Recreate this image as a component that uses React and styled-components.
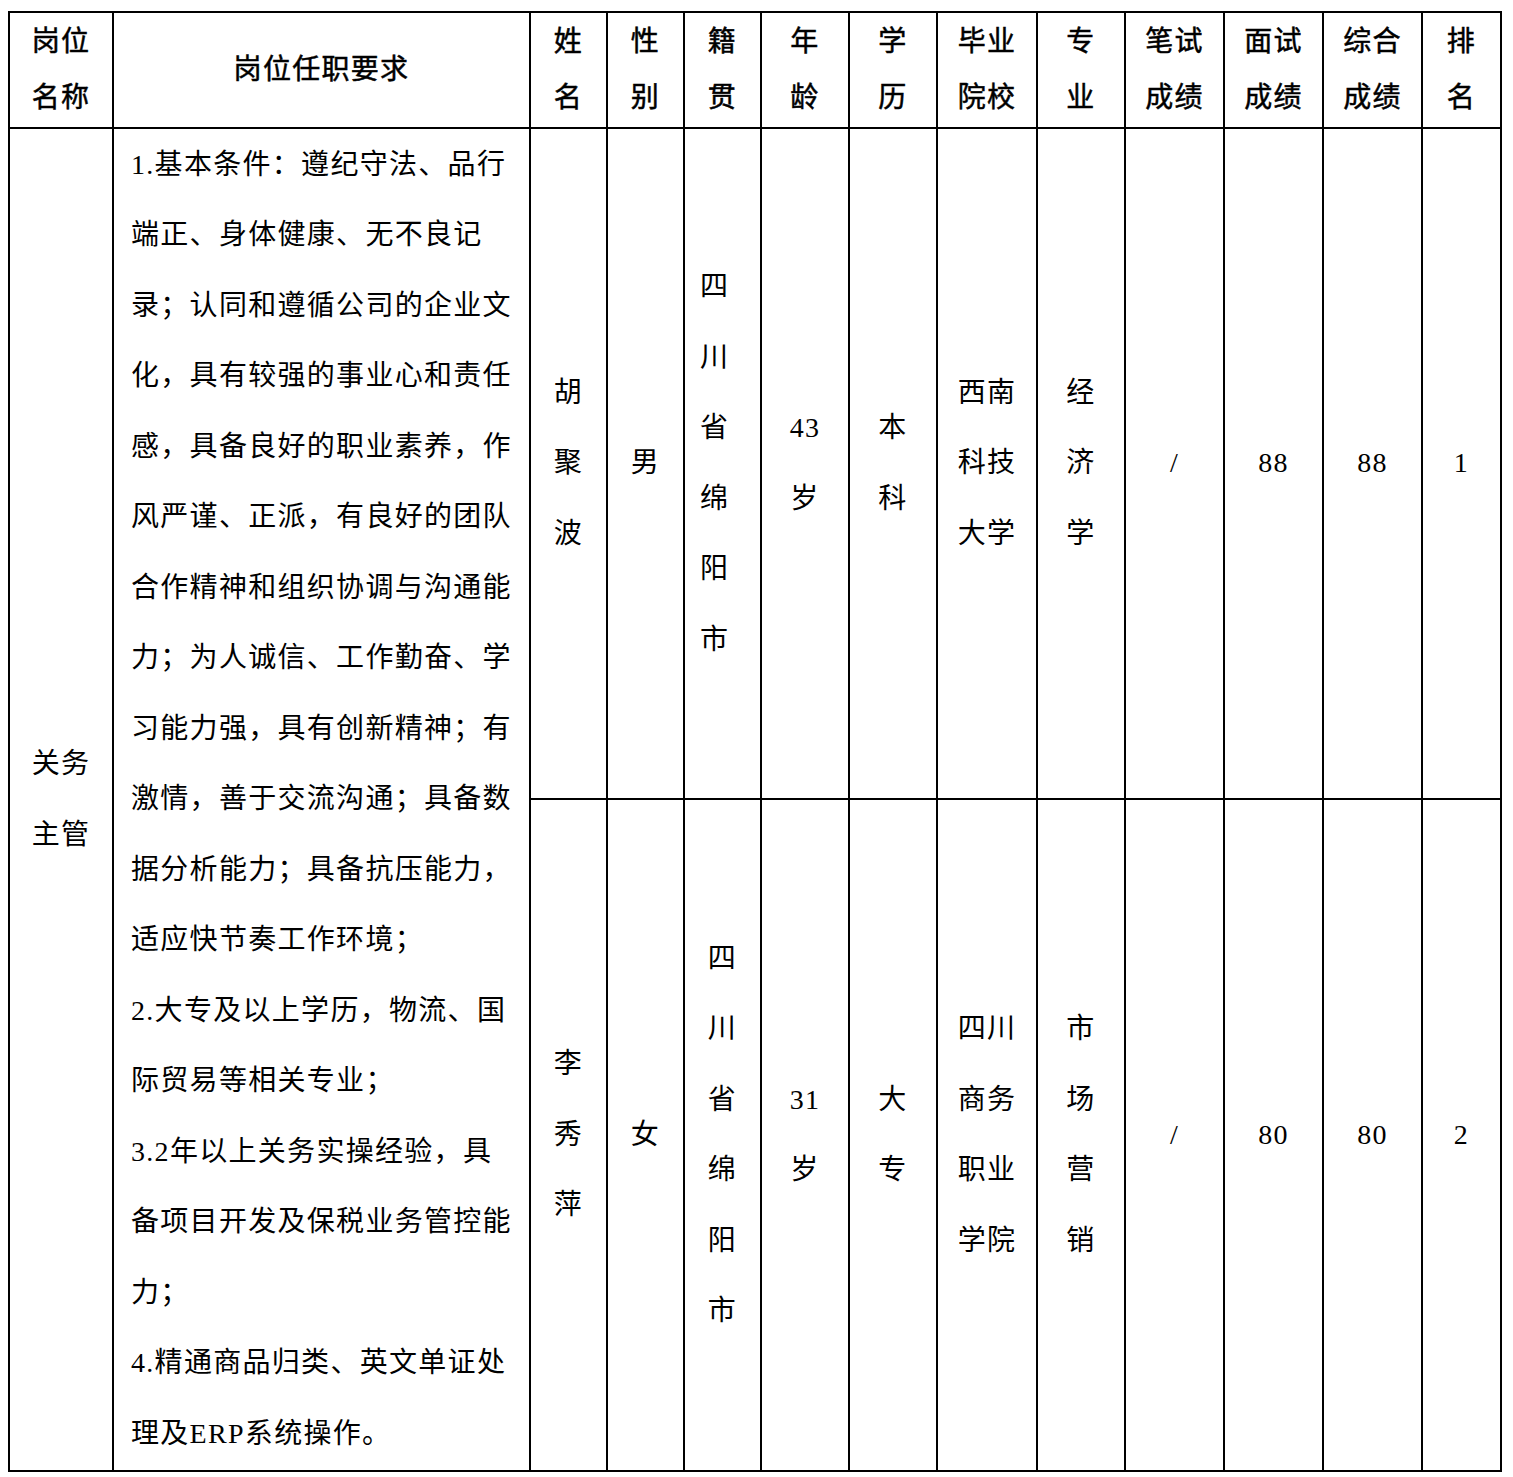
import styled, { createGlobalStyle } from 'styled-components';

const GlobalStyle = createGlobalStyle`
    body {
        margin: 0;
        background: #fff;
        color: #000;
        font-family: "Liberation Serif", "Noto Sans CJK SC", serif;
    }
`

const Page = styled.div`
    padding: 11px 0 0 8px;
`

const Sheet = styled.div`
    display: grid;
    grid-template-columns: 102px 415px 75px 75px 75px 86px 86px 98px 86px 97px 97px 97px 77px;
    grid-template-rows: 114px 669px 670px;
    gap: 2px;
    padding: 2px;
    width: max-content;
    background: #000;
    font-size: 28px;
    letter-spacing: 1.3px;
`

const HeadCell = styled.div`
    background: #fff;
    display: flex;
    flex-direction: column;
    align-items: center;
    justify-content: center;
    line-height: 56px;
    font-weight: 400;
    -webkit-text-stroke: 0.5px #000;
`

const Cell = styled.div`
    background: #fff;
    display: flex;
    flex-direction: column;
    align-items: ${p => (p.$align === 'start' ? 'flex-start' : 'center')};
    justify-content: center;
    padding-left: ${p => (p.$align === 'start' ? '15px' : '0')};
    line-height: 70.5px;
    grid-row: ${p => (p.$span ? `span ${p.$span}` : 'auto')};
`

const Requirements = styled(Cell)`
    align-items: stretch;
    padding: 0 14px 0 17px;
`

const Line = styled.span`
    display: block;
    white-space: nowrap;
`

const headers = [
    ['岗位', '名称'],
    ['岗位任职要求'],
    ['姓', '名'],
    ['性', '别'],
    ['籍', '贯'],
    ['年', '龄'],
    ['学', '历'],
    ['毕业', '院校'],
    ['专', '业'],
    ['笔试', '成绩'],
    ['面试', '成绩'],
    ['综合', '成绩'],
    ['排', '名'],
]

const requirements = [
    '1.基本条件：遵纪守法、品行',
    '端正、身体健康、无不良记',
    '录；认同和遵循公司的企业文',
    '化，具有较强的事业心和责任',
    '感，具备良好的职业素养，作',
    '风严谨、正派，有良好的团队',
    '合作精神和组织协调与沟通能',
    '力；为人诚信、工作勤奋、学',
    '习能力强，具有创新精神；有',
    '激情，善于交流沟通；具备数',
    '据分析能力；具备抗压能力，',
    '适应快节奏工作环境；',
    '2.大专及以上学历，物流、国',
    '际贸易等相关专业；',
    '3.2年以上关务实操经验，具',
    '备项目开发及保税业务管控能',
    '力；',
    '4.精通商品归类、英文单证处',
    '理及ERP系统操作。',
]

const candidates = [
    {
        name: ['胡', '聚', '波'],
        gender: ['男'],
        hometown: ['四', '川', '省', '绵', '阳', '市'],
        hometownAlign: 'start',
        age: ['43', '岁'],
        education: ['本', '科'],
        school: ['西南', '科技', '大学'],
        major: ['经', '济', '学'],
        written: ['/'],
        interview: ['88'],
        total: ['88'],
        rank: ['1'],
    },
    {
        name: ['李', '秀', '萍'],
        gender: ['女'],
        hometown: ['四', '川', '省', '绵', '阳', '市'],
        hometownAlign: 'center',
        age: ['31', '岁'],
        education: ['大', '专'],
        school: ['四川', '商务', '职业', '学院'],
        major: ['市', '场', '营', '销'],
        written: ['/'],
        interview: ['80'],
        total: ['80'],
        rank: ['2'],
    },
]

const Lines = ({ items }) => items.map((t, i) => <Line key={i}>{t}</Line>)

const App = () => {
    return (
        <Page>
            <GlobalStyle />
            <Sheet>
                {headers.map((h, i) => (
                    <HeadCell key={i}>
                        <Lines items={h} />
                    </HeadCell>
                ))}

                <Cell $span={2}>
                    <Lines items={['关务', '主管']} />
                </Cell>
                <Requirements $span={2}>
                    <Lines items={requirements} />
                </Requirements>

                {candidates.map((c, i) => [
                    <Cell key={`n${i}`}><Lines items={c.name} /></Cell>,
                    <Cell key={`g${i}`}><Lines items={c.gender} /></Cell>,
                    <Cell key={`h${i}`} $align={c.hometownAlign}><Lines items={c.hometown} /></Cell>,
                    <Cell key={`a${i}`}><Lines items={c.age} /></Cell>,
                    <Cell key={`e${i}`}><Lines items={c.education} /></Cell>,
                    <Cell key={`s${i}`}><Lines items={c.school} /></Cell>,
                    <Cell key={`m${i}`}><Lines items={c.major} /></Cell>,
                    <Cell key={`w${i}`}><Lines items={c.written} /></Cell>,
                    <Cell key={`i${i}`}><Lines items={c.interview} /></Cell>,
                    <Cell key={`t${i}`}><Lines items={c.total} /></Cell>,
                    <Cell key={`r${i}`}><Lines items={c.rank} /></Cell>,
                ])}
            </Sheet>
        </Page>
    )
}

export default App
